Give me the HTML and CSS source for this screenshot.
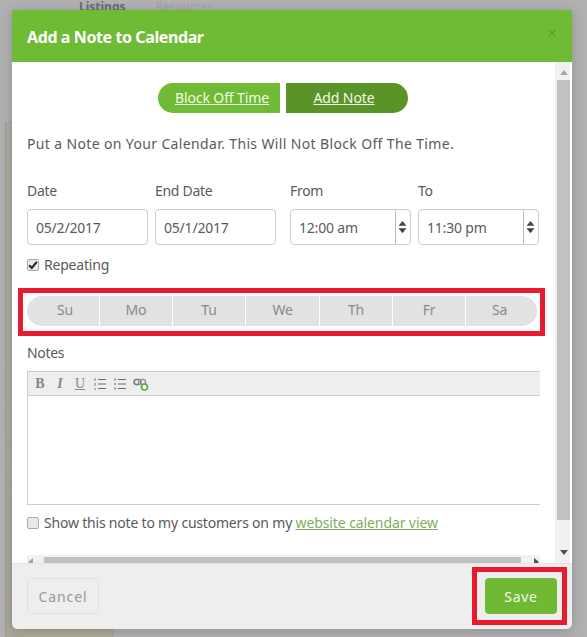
FILE: index.html
```html
<!DOCTYPE html>
<html lang="en">
<head>
<meta charset="utf-8">
<title>Add a Note to Calendar</title>
<link rel="stylesheet" href="styles.css">
</head>
<body>
<div class="backdrop">
  <div class="bg-tabs"><span class="bg-tab-on">Listings</span><span class="bg-tab">Resources</span></div>
  <div class="bg-event"></div>
  <div class="bg-grid"></div>
</div>
<div class="modal">
  <header class="modal-head">
    <h1 class="modal-title">Add a Note to Calendar</h1>
    <span class="modal-close">×</span>
  </header>
  <div class="modal-body">
    <div class="content">
      <div class="switch">
        <a class="switch-btn switch-left">Block Off Time</a>
        <a class="switch-btn switch-right">Add Note</a>
      </div>
      <p class="intro">Put a Note on Your Calendar. This Will Not Block Off The Time.</p>
      <div class="fields">
        <div class="field">
          <label class="label">Date</label>
          <div class="input">05/2/2017</div>
        </div>
        <div class="field field-b">
          <label class="label">End Date</label>
          <div class="input">05/1/2017</div>
        </div>
        <div class="field field-c">
          <label class="label">From</label>
          <div class="input select">12:00 am
            <span class="spin"><svg width="9" height="14" viewBox="0 0 10 16"><path d="M5 1l4.500 5.500h-9z M5 15l4.500-5.500h-9z" fill="#444"/></svg></span>
          </div>
        </div>
        <div class="field field-b">
          <label class="label">To</label>
          <div class="input select">11:30 pm
            <span class="spin"><svg width="9" height="14" viewBox="0 0 10 16"><path d="M5 1l4.500 5.500h-9z M5 15l4.500-5.500h-9z" fill="#444"/></svg></span>
          </div>
        </div>
      </div>
      <label class="check-row check-repeat"><span class="box"><svg width="10" height="10" viewBox="0 0 10 10"><path d="M1.200 5.200l2.600 2.800 5-6.200" fill="none" stroke="#222" stroke-width="2"/></svg></span>Repeating</label>
      <div class="days-mark">
        <div class="days">
          <span class="day">Su</span><span class="day">Mo</span><span class="day">Tu</span><span class="day">We</span><span class="day">Th</span><span class="day">Fr</span><span class="day">Sa</span>
        </div>
      </div>
      <div class="label notes-label">Notes</div>
      <div class="editor">
        <div class="toolbar">
          <span class="tool tool-b">B</span>
          <span class="tool tool-i">I</span>
          <span class="tool tool-u">U</span>
          <svg class="tool-svg" width="14" height="14" viewBox="0 0 14 14"><path d="M1 1h2v3H1zM1 6h2v3H1zM1 11h2v2H1z" fill="#9db9d8"/><path d="M5 2.500h8M5 7h8M5 11.500h8" stroke="#666" stroke-width="1"/></svg>
          <svg class="tool-svg" width="14" height="14" viewBox="0 0 14 14"><path d="M1 1.500h2v2H1zM1 6h2v2H1zM1 10.500h2v2H1z" fill="#7f9fc8"/><path d="M5 2.500h8M5 7h8M5 11.500h8" stroke="#666" stroke-width="1"/></svg>
          <svg class="tool-svg" width="16" height="14" viewBox="0 0 16 14"><rect x="1" y="2.500" width="7" height="5" rx="2.500" fill="none" stroke="#777" stroke-width="1.500"/><rect x="5.500" y="2.500" width="7" height="5" rx="2.500" fill="none" stroke="#999" stroke-width="1.500"/><circle cx="11.500" cy="10" r="3" fill="#fff" stroke="#5aa832" stroke-width="1.600"/></svg>
        </div>
        <div class="editor-area"></div>
      </div>
      <label class="check-row check-show"><span class="box"></span>Show this note to my customers on my&nbsp;<a class="link">website calendar view</a></label>
    </div>
    <div class="vscroll">
      <svg class="arrow" width="8" height="5" viewBox="0 0 8 5"><path d="M4 0l4 5H0z" fill="#a3a3a3"/></svg>
      <div class="vthumb"></div>
      <svg class="arrow" width="8" height="5" viewBox="0 0 8 5"><path d="M4 5l4-5H0z" fill="#505050"/></svg>
    </div>
    <div class="hscroll">
      <svg class="harrow" width="5" height="8" viewBox="0 0 5 8"><path d="M0 4l5-4v8z" fill="#a3a3a3"/></svg>
      <div class="hthumb"></div>
      <svg class="harrow" width="5" height="8" viewBox="0 0 5 8"><path d="M5 4L0 0v8z" fill="#505050"/></svg>
    </div>
  </div>
  <footer class="modal-foot">
    <button class="btn btn-cancel">Cancel</button>
    <div class="save-mark"><button class="btn btn-save">Save</button></div>
  </footer>
</div>
</body>
</html>
```
FILE: styles.css
```css
* { box-sizing: border-box; }
html, body { margin: 0; height: 100%; }
body {
  width: 587px;
  height: 637px;
  overflow: hidden;
  position: relative;
  font-family: "Noto Sans", "Open Sans", sans-serif;
  color: #5a5a5a;
  background: #b0b0b0;
}
.backdrop {
  position: absolute;
  inset: 0;
  background: #b0b0b0;
}
.bg-tabs {
  position: absolute;
  left: 79px;
  top: -2px;
  font-size: 12px;
  line-height: 17px;
  font-weight: 700;
  color: #6c6c6c;
  white-space: nowrap;
}
.bg-tab { margin-left: 30px; color: #a2a2a2; font-weight: 400; }
.bg-event {
  position: absolute;
  left: 5px;
  top: 122px;
  bottom: 0;
  width: 109px;
  background: linear-gradient(#adaba3, #aaa797);
}
.bg-grid {
  position: absolute;
  left: 5px;
  top: 122px;
  bottom: 0;
  width: 437px;
  background-image:
    linear-gradient(#a2a2a0 1px, transparent 1px),
    linear-gradient(90deg, #9c9c9c 1px, transparent 1px);
  background-size: 109px 40.500px;
}
.modal {
  position: absolute;
  left: 12px;
  top: 10px;
  width: 560px;
  height: 619px;
  display: flex;
  flex-direction: column;
  border-radius: 0 0 6px 6px;
  overflow: hidden;
  background: #fff;
  box-shadow: 0 2px 12px rgba(0, 0, 0, .18);
}
.modal-head {
  flex: 0 0 52px;
  background: #6fbb35;
  display: flex;
  justify-content: space-between;
  align-items: flex-start;
  padding: 0 15px;
}
.modal-title {
  margin: 17px 0 0;
  font-size: 16px;
  line-height: 20px;
  font-weight: 700;
  color: #fff;
  letter-spacing: -.4px;
}
.modal-close {
  margin-top: 13px;
  font-size: 17px;
  line-height: 20px;
  color: #5f9f33;
}
.modal-body {
  flex: 1;
  min-height: 0;
  position: relative;
  overflow: hidden;
}
.content {
  padding: 21px 0 0 15px;
  width: 543px;
}
.switch {
  display: flex;
  justify-content: center;
  gap: 6px;
  width: 527px;
  padding-right: 15px;
}
.switch-btn {
  width: 122px;
  height: 30px;
  line-height: 29px;
  text-align: center;
  font-size: 14px;
  letter-spacing: -.1px;
  color: #f1f9ea;
  text-decoration: underline;
}
.switch-left { background: #6fbb35; border-radius: 15px 0 0 15px; padding-left: 6px; }
.switch-right { background: #5a9429; border-radius: 0 15px 15px 0; padding-right: 6px; }
.intro {
  margin: 21px 0 0;
  font-size: 14px;
  line-height: 20px;
  letter-spacing: .36px;
  white-space: nowrap;
}
.fields {
  display: flex;
  margin-top: 27px;
}
.field { width: 121px; }
.field-b { margin-left: 7px; }
.field-c { margin-left: 14px; }
.label {
  display: block;
  font-size: 14px;
  line-height: 20px;
  letter-spacing: -.3px;
}
.input {
  position: relative;
  margin-top: 8px;
  height: 36px;
  border: 1px solid #ccc;
  border-radius: 4px;
  padding-left: 8px;
  font-size: 14px;
  line-height: 35px;
  letter-spacing: -.2px;
  background: #fff;
}
.spin {
  position: absolute;
  right: 0;
  top: 0;
  bottom: 0;
  width: 15px;
  border-left: 1px solid #bbb;
  padding-right: 2px;
  display: flex;
  align-items: center;
  justify-content: center;
}
.check-row {
  display: flex;
  align-items: center;
  font-size: 14px;
  line-height: 20px;
  letter-spacing: -.2px;
  white-space: nowrap;
}
.check-repeat { margin-top: 10px; }
.box {
  width: 12px;
  height: 12px;
  margin-right: 5px;
  border: 1px solid #aaa;
  border-radius: 2px;
  background: #e8e8e8;
  display: flex;
  align-items: center;
  justify-content: center;
}
.days-mark {
  width: 527px;
  height: 48px;
  margin: 13px 0 0 -9px;
  border: 5px solid #e61c2e;
  padding: 3px 4px;
}
.days {
  display: grid;
  grid-template-columns: 72px 73px 73px 74px 73px 73px 72px;
  width: 510px;
  height: 30px;
  border-radius: 15px;
  overflow: hidden;
  background: #e2e2e2;
}
.day {
  text-align: center;
  font-size: 14px;
  line-height: 27px;
  letter-spacing: -.2px;
  color: #8a8a8a;
  border-left: 1px solid #fff;
}
.day:first-child { border-left: 0; padding-left: 4px; }
.day:last-child { padding-right: 4px; }
.notes-label { margin-top: 7px; }
.editor {
  margin-top: 8px;
  width: 513px;
  height: 134px;
  border: 1px solid #ccc;
  border-right: 0;
  display: flex;
  flex-direction: column;
}
.toolbar {
  flex: 0 0 24px;
  background: #eee;
  border-bottom: 1px solid #ccc;
  display: flex;
  align-items: center;
  padding-left: 5px;
  gap: 6px;
}
.tool {
  width: 14px;
  text-align: center;
  font-family: "Liberation Serif", serif;
  font-size: 14px;
  color: #888;
}
.tool-b { font-weight: 700; }
.tool-i { font-style: italic; font-weight: 700; }
.tool-u { text-decoration: underline; }
.tool-svg { display: block; }
.editor-area { flex: 1; background: #fff; }
.check-show { margin-top: 8px; }
.link { color: #7fae58; text-decoration: underline; letter-spacing: -.1px; }
.vscroll {
  position: absolute;
  right: 0;
  top: 0;
  bottom: 0;
  width: 17px;
  padding: 0 2px;
  background: linear-gradient(90deg, #f1f1f1 15px, #fff 15px);
  display: flex;
  flex-direction: column;
  align-items: center;
}
.arrow { flex: 0 0 5px; margin: 8px 0; }
.vthumb {
  width: 13px;
  height: 440px;
  margin: -3px 0 30px;
  background: #c1c1c1;
}
.arrow:last-child { margin: 0; }
.hscroll {
  position: absolute;
  left: 15px;
  top: 493px;
  width: 513px;
  height: 13px;
  background: #f1f1f1;
  display: flex;
  align-items: center;
  justify-content: space-between;
  padding: 0 1px;
}
.hthumb {
  width: 477px;
  height: 9px;
  margin-right: 2px;
  background: #c1c1c1;
}
.modal-foot {
  flex: 0 0 66px;
  position: relative;
  background: #eee;
  border-top: 1px solid #e3e3e3;
  display: flex;
  justify-content: space-between;
  align-items: flex-start;
  padding: 14px 15px 0;
}
.btn {
  width: 72px;
  height: 36px;
  border-radius: 4px;
  font-family: inherit;
  font-size: 14px;
  letter-spacing: .6px;
  padding: 0;
}
.btn-cancel {
  border: 1px solid #e0e0e0;
  background: #eee;
  color: #9a9a9a;
  letter-spacing: .9px;
}
.btn-save {
  border: 0;
  background: #6fb934;
  color: #f2f8ea;
  letter-spacing: .7px;
}
.save-mark {
  position: absolute;
  right: 5px;
  top: 3px;
  width: 95px;
  height: 58px;
  border: 5px solid #e61c2e;
  padding: 6px 0 0 8px;
}
```
